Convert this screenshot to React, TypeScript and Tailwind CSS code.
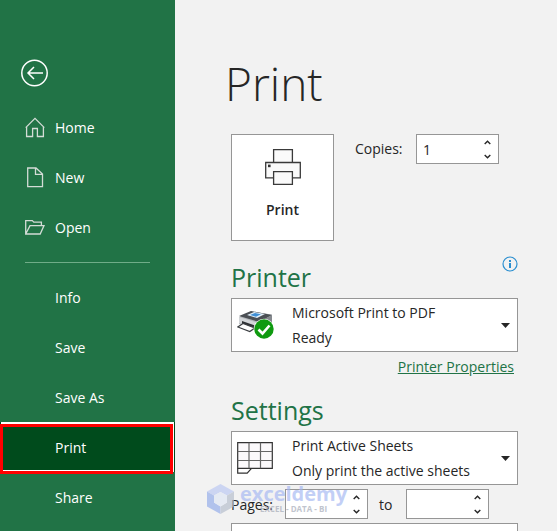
import { useState } from "react";

const line = "#d3dcd6";

function HomeIcon() {
  return (
    <svg width="20" height="21" viewBox="0 0 20 21" fill="none" stroke={line} strokeWidth="1.3">
      <path d="M.7 10.6 10 1.3l9.3 9.3M1.6 9.700v9.800h6v-8h4.800v8h6V9.700" />
    </svg>
  );
}

function NewIcon() {
  return (
    <svg width="20" height="21" viewBox="0 0 20 21" fill="none" stroke={line} strokeWidth="1.3">
      <path d="M2.7 1h8.3l6.500 6v12.7H2.7zM10.500 1v6.4h7" />
    </svg>
  );
}

function OpenIcon() {
  return (
    <svg width="20" height="21" viewBox="0 0 20 21" fill="none" stroke={line} strokeWidth="1.3">
      <path d="M.7 17V3.6h6.6l1.5 1.6h7.6v3.4M.7 17 5 8.6h14L15.2 17z" />
    </svg>
  );
}

function PrintIcon() {
  return (
    <svg width="36" height="36" viewBox="0 0 36 36" fill="#fafafa" stroke="#3a3a3a" strokeWidth="1.3">
      <path d="M8.6 13.5V.7h18.8v12.8" />
      <path d="M.7 13.5h34.6v15.4H.7z" />
      <path d="M8.6 22.6h18.8v12.700H8.6z" />
      <path d="M3 15.6h2.6v2.600H3z" fill="#333" stroke="none" />
    </svg>
  );
}

function PrinterReadyIcon() {
  return (
    <svg width="38" height="30" viewBox="0 0 38 30" fill="none">
      <path d="M2 7 14 1.500 35 4.500v10L21 21 2 14z" fill="#b4b8bc" />
      <path d="M2 6 14 1l21 4-13 7z" fill="#4b4f54" />
      <path d="m10 5 7-3 11 2-8 4z" fill="#e3f0fb" />
      <path d="m13 5 5-2 6 1.200-5 2.500z" fill="#3f8fd6" />
      <path d="m22 12 13-7v10l-13 7z" fill="#85898e" />
      <path d="M2 7v6l19 7v-7z" fill="#d3d6d9" />
      <path d="m5 11 13 4.500V19L5 14.500z" fill="#2d3033" />
      <path d="M6 13.500.8 17l12 4.500 5-3.500z" fill="#fff" stroke="#3b3e42" strokeWidth="1.2" />
      <circle cx="27" cy="19" r="10.300" fill="#fff" />
      <circle cx="27" cy="19" r="9.700" fill="#0f9a10" />
      <path d="m21.500 19.500 4 4 7-8" stroke="#fff" strokeWidth="2.600" />
    </svg>
  );
}

function SheetsIcon() {
  return (
    <svg width="36" height="32" viewBox="0 0 36 32" fill="none" stroke="#333" strokeWidth="1.2">
      <path d="M.7.7h34.600v25.600H.7z" fill="#fbf9fb" />
      <path d="M.7 9.500h34.600M.7 18.500h34.600M12 .7v25.600M23.500.7v25.600" stroke="#666" />
      <path d="M.7 26.300v4.800h9.500l4.300-4.800" />
    </svg>
  );
}

function Chevron(props: { up?: boolean }) {
  return (
    <svg width="7" height="5" viewBox="0 0 7 5" fill="none" stroke="#262626" strokeWidth="1.400">
      <path d={props.up ? "M.7 4 3.500 1.200 6.300 4" : "M.7 1 3.500 3.800 6.300 1"} />
    </svg>
  );
}

const places = [
  { name: "Home", icon: <HomeIcon /> },
  { name: "New", icon: <NewIcon /> },
  { name: "Open", icon: <OpenIcon /> },
];

const actions = ["Info", "Save", "Save As", "Print", "Share"];

function Sidebar() {
  const [active, setActive] = useState("Print");

  return (
    <nav className="w-[175px] shrink-0 bg-[#217346] text-white">
      <button type="button" aria-label="Back" className="mt-[59px] ml-5 block">
        <svg width="28" height="28" viewBox="0 0 28 28" fill="none" stroke="#fff" strokeWidth="1.5">
          <circle cx="14.500" cy="14" r="12.700" />
          <path d="M23 14H8M14 8l-6 6 6 6" />
        </svg>
      </button>
      <div className="mt-[15px]">
        {places.map((place) => (
          <button key={place.name} type="button" className="flex h-[50px] w-full items-center gap-[10px] pl-[25px]">
            {place.icon}
            {place.name}
          </button>
        ))}
      </div>
      <hr className="mx-[25px] mt-[10px] mb-[9px] border-[#70ac88]" />
      {actions.map((action) => (
        <button
          key={action}
          type="button"
          onClick={() => setActive(action)}
          className={`relative block h-[50px] w-full pl-[55px] text-left ${active === action ? "bg-[#004b1c]" : ""}`}
        >
          {action}
          {active === action && (
            <>
              <span className="absolute inset-x-px top-0 bottom-0 border-2 border-white" />
              <span className="absolute top-[2px] right-[2px] -bottom-[2px] left-0 border-3 border-[#fe0000]" />
              <span className="absolute top-[5px] right-[5px] bottom-px left-[3px] border-b border-white" />
            </>
          )}
        </button>
      ))}
    </nav>
  );
}

function Spinner(props: { id: string; label: string; initial: string }) {
  const [value, setValue] = useState(props.initial);

  function step(by: number) {
    setValue(String(Math.max(1, Number(value) + by)));
  }

  return (
    <div className="flex h-[30px] w-[83px] border border-[#969696] bg-white">
      <input
        id={props.id}
        type="text"
        inputMode="numeric"
        value={value}
        onChange={(e) => setValue(e.target.value)}
        className="w-full min-w-0 pl-[6px] outline-none"
      />
      <div className="flex w-[22px] shrink-0 flex-col">
        <button
          type="button"
          aria-label={`Increase ${props.label}`}
          onClick={() => step(1)}
          className="flex flex-1 items-center justify-center"
        >
          <Chevron up />
        </button>
        <button
          type="button"
          aria-label={`Decrease ${props.label}`}
          onClick={() => step(-1)}
          className="flex flex-1 items-center justify-center"
        >
          <Chevron />
        </button>
      </div>
    </div>
  );
}

function Dropdown(props: { icon: React.ReactNode; title: string; detail: string }) {
  return (
    <button
      type="button"
      aria-haspopup="listbox"
      className="flex h-[54px] w-full items-center border border-[#969696] bg-white pr-[7px] pl-[5px] text-left"
    >
      <span className="w-[55px] shrink-0">{props.icon}</span>
      <span className="flex-1 leading-[25px]">
        <span className="block">{props.title}</span>
        <span className="block">{props.detail}</span>
      </span>
      <svg width="9" height="5" viewBox="0 0 9 5" fill="#262626">
        <path d="M0 0h9L4.500 5z" />
      </svg>
    </button>
  );
}

function Watermark() {
  return (
    <div className="pointer-events-none absolute top-[-5px] left-[-24px] flex items-center gap-[6px] opacity-65">
      <svg width="27" height="30" viewBox="0 0 27 30">
        <path d="M13.500 0 27 7.500 20 11.500 13.500 8 7 11.500 0 7.500z" fill="#b9c6f2" />
        <path d="M0 7.500 7 11.500v7l6.500 4V30L0 22.500z" fill="#8fa9ea" />
        <path d="M27 7.500v15L13.500 30v-7.500l6.500-4v-7z" fill="#b3bccb" />
        <path d="m13.500 8 6.500 3.500v7l-6.500 4-6.500-4v-7z" fill="#dfe6f5" />
      </svg>
      <div className="text-center font-bold">
        <p className="text-[20px] leading-[20px] text-[#a3b6f2]">exceldemy</p>
        <p className="text-[8px] leading-[10px] text-[#a0a6b4]">EXCEL - DATA - BI</p>
      </div>
    </div>
  );
}

export default function App() {
  return (
    <div className="flex h-screen overflow-hidden bg-[#f2f2f2] font-['Open_Sans','Noto_Sans',sans-serif] text-[14px] text-[#262626]">
      <Sidebar />
      <main className="min-w-0 flex-1 pt-[52px] pr-[39px] pl-14">
        <h1 className="-ml-[6px] text-[46px] leading-[62px] font-light">Print</h1>
        <div className="mt-5 flex items-start">
          <button
            type="button"
            className="flex h-[107px] w-[103px] flex-col items-center border border-[#969696] bg-white pt-[14px] font-semibold"
          >
            <PrintIcon />
            <span className="mt-[14px]">Print</span>
          </button>
          <label htmlFor="copies" className="ml-[21px] w-[61px] leading-[30px]">
            Copies:
          </label>
          <Spinner id="copies" label="copies" initial="1" />
        </div>

        <div className="mt-[15px] flex justify-between">
          <h2 className="text-[25px] leading-[42px] text-[#217346]">Printer</h2>
          <button type="button" aria-label="Printer status" className="h-4">
            <svg width="16" height="16" viewBox="0 0 16 16" fill="none" stroke="#2b8fd0" strokeWidth="1.200">
              <circle cx="8" cy="8" r="7" />
              <path d="M8 7v5M8 4v2" strokeWidth="2" />
            </svg>
          </button>
        </div>
        <Dropdown icon={<PrinterReadyIcon />} title="Microsoft Print to PDF" detail="Ready" />
        <div className="mt-1 pr-1 text-right leading-[22px]">
          <a href="#properties" className="text-[#217346] underline">
            Printer Properties
          </a>
        </div>

        <h2 className="mt-[11px] text-[25px] leading-[42px] text-[#217346]">Settings</h2>
        <Dropdown icon={<SheetsIcon />} title="Print Active Sheets" detail="Only print the active sheets" />
        <div className="relative mt-1 flex items-center">
          <label htmlFor="from" className="w-[54px]">
            Pages:
          </label>
          <Spinner id="from" label="first page" initial="" />
          <label htmlFor="to" className="w-[38px] pl-[11px]">
            to
          </label>
          <Spinner id="to" label="last page" initial="" />
          <Watermark />
        </div>
        <button
          type="button"
          aria-label="Sides"
          className="mt-1 h-[54px] w-full border border-[#969696] bg-white"
        />
      </main>
    </div>
  );
}
